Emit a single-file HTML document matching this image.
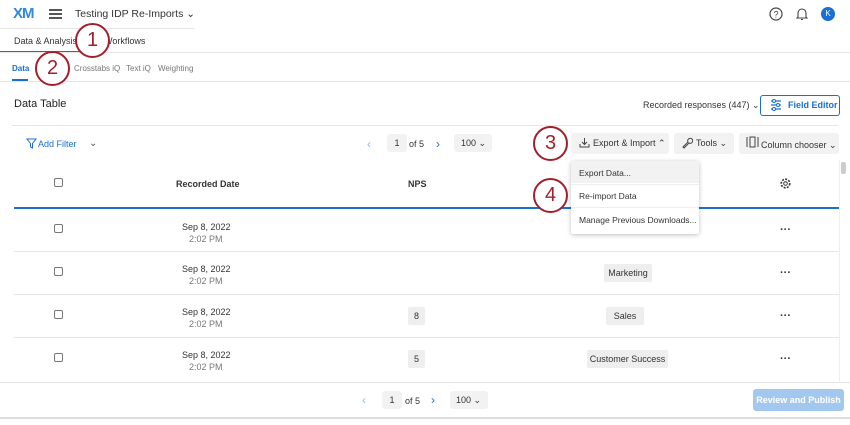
<!DOCTYPE html>
<html><head><style>
*{box-sizing:border-box;margin:0;padding:0}
body{width:850px;height:425px;overflow:hidden;background:#fff;font-family:"Liberation Sans",sans-serif;color:#333;position:relative;font-size:9px}
.a{position:absolute;white-space:nowrap}
.c{position:absolute;border:2.2px solid #a3202a;border-radius:50%;width:35px;height:35px;background:#fff;color:#a3202a;font-size:20px;text-align:center;line-height:31px}
.hl{position:absolute;height:1px;background:#e6e6e6}
.btn{position:absolute;background:#f2f2f2;border-radius:3px;color:#333}
.cb{position:absolute;width:9px;height:9px;border:1px solid #777;border-radius:2px;left:54px}
.tag{position:absolute;background:#eee;border-radius:2px;text-align:center;line-height:18px;height:18px}
.dots{position:absolute;left:780px;font-size:11px;font-weight:bold}
</style></head><body>
<div class="a" style="left:13px;top:5px;font-size:15px;font-weight:bold;color:#2a8ae0;letter-spacing:-1px">XM</div>
<div class="a" style="left:49px;top:9px;width:13px;height:1.5px;background:#555;box-shadow:0 4px 0 #555,0 8px 0 #555"></div>
<div class="a" style="left:75px;top:8px;font-size:10.5px">Testing IDP Re-Imports &#8964;</div>
<svg class="a" style="left:769px;top:7px" width="14" height="14"><circle cx="7" cy="7" r="6" fill="none" stroke="#444" stroke-width="1.2"/><text x="7" y="10.5" font-size="9" text-anchor="middle" fill="#444" font-family="Liberation Sans">?</text></svg>
<svg class="a" style="left:796px;top:7px" width="12" height="14"><path d="M2 10 L2 6 A4 4 0 0 1 10 6 L10 10 L11 11 L1 11 Z M5 12.5 h2" fill="none" stroke="#444" stroke-width="1.1"/></svg>
<div class="a" style="left:821px;top:7px;width:14px;height:14px;border-radius:50%;background:#1a6fd1;color:#fff;font-size:8px;text-align:center;line-height:14px">K</div>
<div class="hl" style="left:0;top:28px;width:195px"></div>
<div class="a" style="left:14px;top:36px">Data &amp; Analysis</div>
<div class="a" style="left:104px;top:36px">Workflows</div>
<div class="a" style="left:0;top:51px;width:80px;height:1.5px;background:#1a6fd1"></div>
<div class="hl" style="left:0;top:52px;width:850px"></div>
<div class="a" style="left:12px;top:64px;font-size:8px;font-weight:bold;color:#1a6fd1">Data</div>
<div class="a" style="left:74px;top:64px;font-size:8px;color:#777">Crosstabs iQ</div>
<div class="a" style="left:126px;top:64px;font-size:8px;color:#777">Text iQ</div>
<div class="a" style="left:158px;top:64px;font-size:8px;color:#777">Weighting</div>
<div class="a" style="left:12px;top:79px;width:16px;height:2px;background:#1a6fd1"></div>
<div class="hl" style="left:0;top:81px;width:850px"></div>
<div class="a" style="left:14px;top:98px;font-size:11px;color:#222">Data Table</div>
<div class="a" style="left:643px;top:100px">Recorded responses (447) &#8964;</div>
<div class="a" style="left:760px;top:95px;width:80px;height:21px;border:1px solid #1a6fd1;border-radius:3px;color:#1a6fd1;font-weight:bold;line-height:19px;padding-left:27px">Field Editor</div>
<svg class="a" style="left:770px;top:99px" width="12" height="12"><path d="M1 2h10M1 6h10M1 10h10" stroke="#1a6fd1" stroke-width="1.2"/><circle cx="4" cy="2" r="1.5" fill="#fff" stroke="#1a6fd1"/><circle cx="8" cy="6" r="1.5" fill="#fff" stroke="#1a6fd1"/><circle cx="4" cy="10" r="1.5" fill="#fff" stroke="#1a6fd1"/></svg>
<div class="hl" style="left:12px;top:125px;width:826px"></div>
<svg class="a" style="left:26px;top:138px" width="11" height="11"><path d="M1 1h9L6.5 5.5V10L4.5 9V5.5Z" fill="none" stroke="#1a6fd1" stroke-width="1"/></svg>
<div class="a" style="left:38px;top:139px;color:#1a6fd1">Add Filter</div>
<div class="a" style="left:89px;top:138px;color:#555;font-size:10px">&#8964;</div>
<div class="a" style="left:367px;top:137px;color:#8fb8e8;font-size:12px">&#8249;</div>
<div class="btn" style="left:387px;top:134px;width:20px;height:18px;text-align:center;line-height:18px">1</div>
<div class="a" style="left:409px;top:139px">of 5</div>
<div class="a" style="left:436px;top:137px;color:#1a6fd1;font-size:12px">&#8250;</div>
<div class="btn" style="left:454px;top:134px;width:38px;height:18px;line-height:18px;padding-left:7px">100 &#8964;</div>
<div class="btn" style="left:571px;top:133px;width:98px;height:21px;line-height:21px;padding-left:22px">Export &amp; Import &#8963;</div>
<svg class="a" style="left:579px;top:137px" width="11" height="11"><path d="M5.5 1v6M3 5l2.5 2.5L8 5M1 7v3h9V7" fill="none" stroke="#444"/></svg>
<div class="btn" style="left:674px;top:133px;width:60px;height:21px;line-height:21px;padding-left:22px">Tools &#8964;</div>
<svg class="a" style="left:681px;top:137px" width="12" height="12"><path d="M2 10l5-5a2.5 2.5 0 1 1 1 1l-5 5z" fill="none" stroke="#444"/></svg>
<div class="btn" style="left:739px;top:133px;width:100px;height:21px;line-height:24px;padding-left:22px">Column chooser &#8964;</div>
<svg class="a" style="left:746px;top:136px" width="13" height="12"><path d="M1 1v10M12 1v10M4 1h5v10H4z" fill="none" stroke="#444"/></svg>
<div class="cb" style="top:178px"></div>
<div class="a" style="left:176px;top:179px;font-weight:bold">Recorded Date</div>
<div class="a" style="left:408px;top:179px;font-weight:bold">NPS</div>
<svg class="a" style="left:779px;top:177px" width="13" height="13"><circle cx="6.5" cy="6.5" r="4.3" fill="none" stroke="#333" stroke-width="1.6" stroke-dasharray="2 1.3"/><circle cx="6.5" cy="6.5" r="1.8" fill="none" stroke="#333"/></svg>
<div class="a" style="left:14px;top:207px;width:825px;height:1.5px;background:#1a6fd1"></div>
<div class="a" style="left:841px;top:162px;width:5px;height:12px;background:#ccc;border-radius:2px"></div>
<div class="a" style="left:839px;top:160px;width:1px;height:222px;background:#eee"></div>

<div class="cb" style="top:224px"></div><div class="a" style="left:182px;top:222px">Sep 8, 2022</div><div class="a" style="left:189px;top:234px;color:#777">2:02 PM</div><div class="dots" style="top:224px">&middot;&middot;&middot;</div>
<div class="hl" style="left:14px;top:251px;width:825px"></div>
<div class="cb" style="top:267px"></div><div class="a" style="left:182px;top:264px">Sep 8, 2022</div><div class="a" style="left:189px;top:276px;color:#777">2:02 PM</div><div class="tag" style="left:604px;top:264px;width:48px">Marketing</div><div class="dots" style="top:267px">&middot;&middot;&middot;</div>
<div class="hl" style="left:14px;top:294px;width:825px"></div>
<div class="cb" style="top:310px"></div><div class="a" style="left:182px;top:307px">Sep 8, 2022</div><div class="a" style="left:189px;top:319px;color:#777">2:02 PM</div><div class="tag" style="left:408px;top:307px;width:17px">8</div><div class="tag" style="left:606px;top:307px;width:38px">Sales</div><div class="dots" style="top:310px">&middot;&middot;&middot;</div>
<div class="hl" style="left:14px;top:337px;width:825px"></div>
<div class="cb" style="top:353px"></div><div class="a" style="left:182px;top:350px">Sep 8, 2022</div><div class="a" style="left:189px;top:362px;color:#777">2:02 PM</div><div class="tag" style="left:408px;top:350px;width:17px">5</div><div class="tag" style="left:587px;top:350px;width:81px">Customer Success</div><div class="dots" style="top:353px">&middot;&middot;&middot;</div>
<div class="hl" style="left:0;top:382px;width:850px"></div>

<div class="a" style="left:362px;top:393px;color:#8fb8e8;font-size:12px">&#8249;</div>
<div class="btn" style="left:382px;top:391px;width:20px;height:18px;text-align:center;line-height:18px">1</div>
<div class="a" style="left:405px;top:396px">of 5</div>
<div class="a" style="left:431px;top:393px;color:#1a6fd1;font-size:12px">&#8250;</div>
<div class="btn" style="left:450px;top:391px;width:38px;height:18px;line-height:18px;padding-left:6px">100 &#8964;</div>
<div class="a" style="left:753px;top:389px;width:91px;height:22px;background:#a3c8ef;border-radius:3px;color:#fff;font-weight:bold;text-align:center;line-height:22px">Review and Publish</div>
<div class="a" style="left:0;top:417px;width:850px;height:2px;background:#ddd"></div>

<div class="a" style="left:571px;top:161px;width:128px;height:73px;background:#fff;box-shadow:0 1px 5px rgba(0,0,0,.25);border-radius:2px"></div>
<div class="a" style="left:571px;top:161px;width:128px;height:22px;background:#f2f2f2"></div>
<div class="a" style="left:579px;top:168px;font-size:8.5px">Export Data...</div>
<div class="hl" style="left:571px;top:184px;width:128px;background:#eee"></div>
<div class="a" style="left:579px;top:191px;font-size:8.5px">Re-import Data</div>
<div class="hl" style="left:571px;top:207px;width:128px;background:#eee"></div>
<div class="a" style="left:579px;top:215px;font-size:8.5px">Manage Previous Downloads...</div>

<div class="c" style="left:75px;top:23px">1</div>
<div class="c" style="left:35px;top:51px">2</div>
<div class="c" style="left:533px;top:126px">3</div>
<div class="c" style="left:533px;top:178px">4</div>
</body></html>
